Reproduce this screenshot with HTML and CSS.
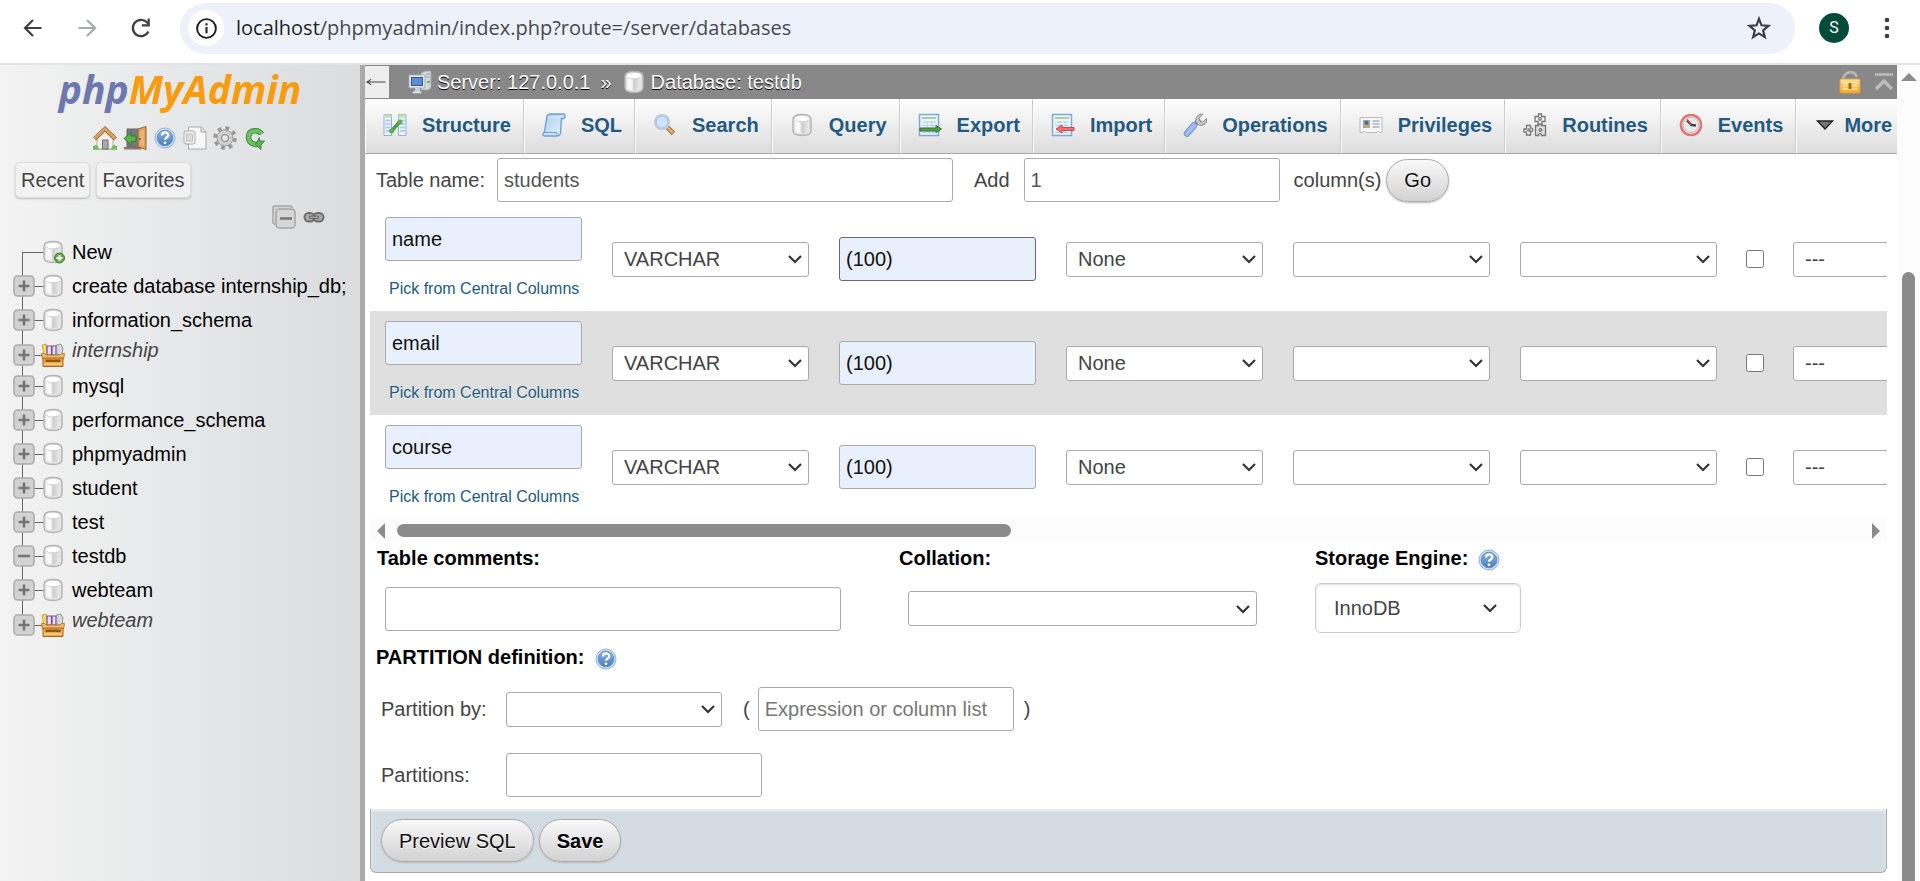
FILE: index.html
```html
<!DOCTYPE html>
<html lang="en">
<head>
<meta charset="utf-8">
<title>localhost / 127.0.0.1 / testdb | phpMyAdmin</title>
<link rel="stylesheet" href="styles.css">
</head>
<body>
<svg class="sprite" aria-hidden="true">
  <defs>
    <linearGradient id="g-cyl" x1="0" x2="1" y1="0" y2="0"><stop offset="0" stop-color="#fff"/><stop offset=".35" stop-color="#f4f4f4"/><stop offset=".5" stop-color="#cdcdcd"/><stop offset="1" stop-color="#e9e9e9"/></linearGradient>
    <linearGradient id="g-blue" x1="0" x2="0" y1="0" y2="1"><stop offset="0" stop-color="#8fb4e0"/><stop offset="1" stop-color="#4a7cb8"/></linearGradient>
    <linearGradient id="g-paper" x1="0" x2="1" y1="0" y2="1"><stop offset="0" stop-color="#a9cff2"/><stop offset="1" stop-color="#e6f2fc"/></linearGradient>
    <linearGradient id="g-gold" x1="0" x2="0" y1="0" y2="1"><stop offset="0" stop-color="#ffe29a"/><stop offset="1" stop-color="#f0a92c"/></linearGradient>
  </defs>
  <symbol id="i-db" viewBox="0 0 24 24">
    <path d="M3 6.500C3 2.500 6.500 1.500 12 1.500s9 1 9 5v11c0 4-3.500 5-9 5s-9-1-9-5z" fill="#e3e3e3" stroke="#b4b4b4" stroke-width="1.400"/>
    <path d="M5.500 6.500v11.500c1 3 12 3 13 0V6.500z" fill="url(#g-cyl)"/>
    <ellipse cx="12" cy="5.800" rx="6.800" ry="2.800" fill="#fff"/>
    <path d="M5.500 7c1 2.600 12 2.600 13 0" fill="none" stroke="#d2d2d2"/>
  </symbol>
  <symbol id="i-dbnew" viewBox="0 0 24 24">
    <use href="#i-db" width="24" height="24"/>
    <circle cx="18.500" cy="18" r="5" fill="#62ab47" stroke="#3e7d2c" stroke-width="1"/>
    <path d="M18.500 15v6M15.500 18h6" stroke="#fff" stroke-width="2"/>
  </symbol>
  <symbol id="i-group" viewBox="0 0 24 24">
    <path d="M1 2l4-1 1.500 11H3z" fill="#f3d768" stroke="#b99b33" stroke-width=".8"/>
    <path d="M6 3h4.500v9H6zM11 3h4v9h-4z" fill="#eadcf2" stroke="#7a4f8c" stroke-width="1.200"/>
    <path d="M15.500 2l4-1 2.500 4-1 7h-5z" fill="#d6d9e0" stroke="#8d929c"/>
    <path d="M.5 10.500h3l1.500 1.500h14l1.500-1.500h3l-1 5.500h-21z" fill="#f2bb6e" stroke="#b0752a" stroke-width=".9"/>
    <path d="M2 15h20v8.500H2z" fill="#e9a64c" stroke="#a66a1e" stroke-width="1"/>
    <path d="M4.500 16.500h15v2.500h-15z" fill="#94580f"/>
    <path d="M3 21h18" stroke="#ffd79a" stroke-width="1.400"/>
  </symbol>
  <symbol id="i-plus" viewBox="0 0 22 22"><rect x="1" y="1" width="20" height="20" rx="3.500" fill="#d2d2d2" stroke="#adadad" stroke-width="1.600"/><path d="M11 5.500v11M5.500 11h11" stroke="#777" stroke-width="2.600"/></symbol>
  <symbol id="i-minus" viewBox="0 0 22 22"><rect x="1" y="1" width="20" height="20" rx="3.500" fill="#d2d2d2" stroke="#adadad" stroke-width="1.600"/><path d="M5 11h12" stroke="#777" stroke-width="2.600"/></symbol>
  <symbol id="i-collapse" viewBox="0 0 24 24"><path d="M3 19c-1.500 0-2-.7-2-2V3c0-1.500.7-2 2-2h15c1.500 0 2 1 2 2" fill="#d4d4d4" stroke="#a6a6a6" stroke-width="1.500"/><rect x="4" y="4" width="19" height="19" rx="3.500" fill="#d6d6d6" stroke="#a6a6a6" stroke-width="1.500"/><path d="M8 13.500h12" stroke="#777" stroke-width="2.600"/></symbol>
  <symbol id="i-link" viewBox="0 0 24 24"><rect x="2.500" y="8" width="10" height="8.500" rx="4.200" fill="#aaa" stroke="#6d6d6d" stroke-width="2"/><rect x="11.500" y="8" width="10" height="8.500" rx="4.200" fill="#aaa" stroke="#6d6d6d" stroke-width="2"/><path d="M7 12.200h10" stroke="#555" stroke-width="3"/><path d="M7.500 12.200h9" stroke="#d0d0d0" stroke-width="1"/></symbol>
  <symbol id="i-home" viewBox="0 0 24 24">
    <path d="M0 20h24v3.500H0z" fill="#62a552"/><path d="M4 12l8-8 8 8v11H4z" fill="#f3efe9" stroke="#a9a39b" stroke-width=".8"/>
    <path d="M9.500 14h5.500v9H9.500z" fill="#a9aab0" stroke="#6e6f76"/>
    <path d="M1.500 13L12 3l10.500 10" fill="none" stroke="#9a6a33" stroke-width="4.200"/><path d="M1.500 12.700L12 2.700l10.500 10" fill="none" stroke="#dba267" stroke-width="2.600"/>
    <path d="M0 21c2-3 5-3 6 2.500H0zM24 21c-2-3-5-3-6 2.500h6z" fill="#78bd5f"/>
  </symbol>
  <symbol id="i-exit" viewBox="0 0 24 24">
    <path d="M4 3h14v18H4z" fill="#75797f" stroke="#666"/><path d="M1 21h17v2.500H1z" fill="#8a7566"/>
    <path d="M15 3l8-2.500v23L15 21z" fill="#dba05c" stroke="#9d6a31" stroke-width="1"/><path d="M17 5l4-1.500v17L17 19z" fill="#e8b67a"/>
    <circle cx="17" cy="13" r="1" fill="#75501f"/>
    <path d="M1 12.500l7-6v3.500h5v5.500H8V19z" fill="#59b34a" stroke="#2f7d2b"/>
  </symbol>
  <symbol id="i-help" viewBox="0 0 24 24">
    <circle cx="12" cy="12" r="10" fill="#cfe0f3" stroke="#8fb3dc" stroke-width="1"/><circle cx="12" cy="12" r="7.800" fill="url(#g-blue)" stroke="#5f8fca" stroke-width="1"/>
    <path d="M9 9.500c0-4 6.300-4 6.300-.3 0 2.300-3.200 2.300-3.200 4.600" fill="none" stroke="#fff" stroke-width="2.200"/><circle cx="12" cy="16.800" r="1.400" fill="#fff"/>
  </symbol>
  <symbol id="i-docs" viewBox="0 0 24 24">
    <path d="M5.500 1h13L23 5.500V23H5.500z" fill="#f7f7f7" stroke="#a9a9a9"/><path d="M18 1v5h5" fill="#ddd" stroke="#a9a9a9"/>
    <rect x="1" y="5" width="11" height="13" rx="2" fill="#f2f2f2" stroke="#aaa"/><rect x="3.500" y="8" width="6" height="7" fill="#ddd" stroke="#bbb"/>
  </symbol>
  <symbol id="i-gear" viewBox="0 0 24 24">
    <circle cx="12" cy="12" r="9.800" fill="none" stroke="#999" stroke-width="4" stroke-dasharray="3.850 3.850"/>
    <circle cx="12" cy="12" r="8" fill="#d0d0d0" stroke="#9d9d9d"/><circle cx="12" cy="12" r="3.500" fill="#e9e9e9" stroke="#999" stroke-width="1.500"/>
  </symbol>
  <symbol id="i-reload" viewBox="0 0 24 24"><path d="M18.500 8C16 3.500 6 3 5.500 11c0 6 5 7.500 8.500 7.500" fill="none" stroke="#3d8a3a" stroke-width="5.500"/><path d="M18.500 8C16 3.500 6 3 5.500 11c0 6 5 7.500 8.500 7.500" fill="none" stroke="#6cc063" stroke-width="3.700"/><path d="M16.500 11.500v3.500h5L18 19v4.500l-5.500-5z" fill="#5cb054" stroke="#3d8a3a"/></symbol>
  <symbol id="i-server" viewBox="0 0 24 24">
    <path d="M13 3l4-2h6v17l-3 2h-7z" fill="#d5d8db" stroke="#9fa4a9"/><path d="M18 4h4M18 7h4" stroke="#9fa4a9"/><circle cx="20.500" cy="12" r="1.300" fill="#56b04d"/>
    <rect x="1" y="5" width="16" height="13" rx="1" fill="#e8ecf1" stroke="#a3abb5"/><rect x="3.500" y="7.500" width="11" height="8" fill="#5c8dd6" stroke="#2f5796"/>
    <path d="M7.500 18h4l1 4h-6z" fill="#cfd3d8"/><path d="M4.500 22.500h9" stroke="#dfe2e5" stroke-width="1.600"/>
  </symbol>
  <symbol id="i-structure" viewBox="0 0 24 24">
    <path d="M1 1.500h7.500v21H1zM15.500 1.500H23v21h-7.500z" fill="#eaf3fb" stroke="#8db4dc"/>
    <path d="M1 1.500h7.500v3H1zM15.500 1.500H23v3h-7.500z" fill="#bfe3a8"/>
    <path d="M2.500 7.500h5M2.500 11h5M2.500 14.500h5M2.500 18h5M17 7.500h5M17 11h5M17 14.500h5M17 18h5" stroke="#a8c9ea" stroke-width="1.500"/>
    <path d="M8.500 18l8-9" stroke="#4f9e44" stroke-width="3.500"/><circle cx="8.500" cy="18" r="2.500" fill="#5fae50"/><circle cx="17" cy="9" r="2.500" fill="#5fae50"/>
  </symbol>
  <symbol id="i-sql" viewBox="0 0 24 24">
    <path d="M5 2.500C6 1 7.500 1 8.500 1h13c2 .3 2.300 3 .5 4.500h-2.500L18.500 20c-.3 2-1.500 3-3.500 3H2.500C0 23 .5 19.500 2.500 19z" fill="url(#g-paper)" stroke="#6f9dd2" stroke-width="1.300"/>
    <path d="M2.500 19.500h11.500c1 0 1.500 1.500.5 3" fill="#cfe3f7" stroke="#6f9dd2" stroke-width="1.100"/><path d="M7.500 4.500h10.500" stroke="#d9ebfb" stroke-width="1.500"/>
  </symbol>
  <symbol id="i-search" viewBox="0 0 24 24"><path d="M13.500 13.500l7 7" stroke="#a8713a" stroke-width="4.600"/><path d="M13.500 13.500l6.500 6.500" stroke="#e2ad6d" stroke-width="2.600"/><circle cx="9" cy="9" r="6.900" fill="#cfe5fa" stroke="#c3cadb" stroke-width="2.400"/><circle cx="9" cy="9" r="5.700" fill="none" stroke="#a5c4ea" stroke-width=".8"/></symbol>
  <symbol id="i-export" viewBox="0 0 24 24"><rect x="1.500" y="1.500" width="19" height="21" fill="#edf5fc" stroke="#7ea8d8" stroke-width="1.500"/><path d="M4 5h14" stroke="#8cc670" stroke-width="1.500"/><path d="M4 9h14M4 12.500h14M9 8v11M14 8v11M4 19.500h14" stroke="#b3cdea"/><path d="M2 15h16v-2.500l5.500 3.500-5.500 3.500V18H2z" fill="#4ea045" stroke="#2e6e2b"/></symbol>
  <symbol id="i-import" viewBox="0 0 24 24"><rect x="1.500" y="1.500" width="19" height="21" fill="#edf5fc" stroke="#7ea8d8" stroke-width="1.500"/><path d="M4 5h14" stroke="#8cc670" stroke-width="1.500"/><path d="M4 9h14M4 12.500h14M9 8v11M14 8v11M4 19.500h14" stroke="#b3cdea"/><path d="M23 14.500h-12v-2.500l-6 4 6 4v-2.500h12z" fill="#ef7272" stroke="#cf4545"/></symbol>
  <symbol id="i-wrench" viewBox="0 0 24 24"><path d="M11 12l6-5.500" stroke="#8b8b8b" stroke-width="4.500"/><path d="M20 1.200l-4 4 .8 3 3 .8 3.700-3.500c1 4-2.500 8-7 6.500-3-1-4.500-4-3-7.500 1-2.500 4-4 6.500-3.300z" fill="#c9c9c9" stroke="#8b8b8b"/><path d="M4 20.500l7-8" stroke="#6d93d0" stroke-width="6.500" stroke-linecap="round"/><path d="M4 20.500l7-8" stroke="#9dbdec" stroke-width="4.700" stroke-linecap="round"/></symbol>
  <symbol id="i-priv" viewBox="0 0 24 24"><path d="M1 4.500h22v15h-2l-1.500-1.500-1.500 1.500H7L5.500 18 4 19.500H1z" fill="#f4f6f8" stroke="#b5bcc4"/><rect x="4" y="7" width="7" height="8" fill="#7cb2e6"/><circle cx="7.500" cy="9.800" r="2" fill="#8a5a2d"/><path d="M4.500 15c0-3.500 6-3.500 6 0z" fill="#e7a23c"/><path d="M13.500 8h7M13.500 11h7M13.500 14h7" stroke="#a9b3be" stroke-width="1.400"/></symbol>
  <symbol id="i-routines" viewBox="0 0 24 24"><g fill="none" stroke="#777" stroke-width="1.300"><path d="M12.500 12.500h3c-1-2.500 4-2.500 3 0h4v10h-4c.5-2.500-3.500-2.500-3 0h-3z" fill="#ddd"/><path d="M15.500 1h3v2.500H22v5h-3V11h-4V8.500h-3v-5h3.500z" fill="#f3f3f3"/><path d="M1 16h2.500v-3.500h4V15c3-.8 3 4.500 0 3.500V22h-4v-3H1z" fill="#f3f3f3"/><circle cx="17" cy="6" r="1.300"/><circle cx="6" cy="17" r="1.200"/><circle cx="17.500" cy="17" r="1.300"/></g></symbol>
  <symbol id="i-clock" viewBox="0 0 24 24"><circle cx="12" cy="12" r="10" fill="#f5f5f5" stroke="#e57373" stroke-width="2.600"/><circle cx="12" cy="12" r="7.600" fill="#e9e9e9" stroke="#c0c0c0"/><path d="M8 7.500l4.500 4.500 4.500.5" fill="none" stroke="#444" stroke-width="2.400"/><path d="M12 12L8 6" stroke="#d44" stroke-width="1"/></symbol>
  <symbol id="i-more" viewBox="0 0 24 24"><path d="M4.500 8h15L12 16z" fill="#777" stroke="#222" stroke-width="1.400"/></symbol>
  <symbol id="i-lock" viewBox="0 0 24 24"><path d="M5.500 9C5 1 18 0 18.500 7" fill="none" stroke="#b8b8b8" stroke-width="2.600"/><rect x="2" y="9" width="20" height="14" rx="1" fill="url(#g-gold)" stroke="#e0a03a"/><path d="M5 13h14M5 16h14M5 19h14" stroke="#fff0b8" stroke-width="1.200"/><path d="M10.500 13h3v6h-3z" fill="#a86c0e"/></symbol>
  <symbol id="i-top" viewBox="0 0 24 24"><path d="M3 4.500h18" stroke="#bdbdbd" stroke-width="2.600"/><path d="M4 19l8-8 8 8" fill="none" stroke="#bdbdbd" stroke-width="3.200"/></symbol>
</svg>

<header class="browser">
  <button class="nav" aria-label="Back"><svg viewBox="0 0 24 24"><path d="M20.500 12H5M12 4l-8 8 8 8" fill="none" stroke="#3c4043" stroke-width="2.200"/></svg></button>
  <button class="nav nav-off" aria-label="Forward"><svg viewBox="0 0 24 24"><path d="M3.500 12H19M12 4l8 8-8 8" fill="none" stroke="#a8abae" stroke-width="2.200"/></svg></button>
  <button class="nav" aria-label="Reload"><svg viewBox="0 0 24 24"><path d="M19.500 15.500A8.200 8.200 0 1 1 18 6.300l2 2.200" fill="none" stroke="#3c4043" stroke-width="2.300"/><path d="M20.800 2.500v8h-8V8.300h5.800V2.500z" fill="#3c4043"/></svg></button>
  <div class="omnibox">
    <button class="site-info" aria-label="View site information"><svg viewBox="0 0 24 24"><circle cx="12" cy="12" r="9" fill="none" stroke="#1f1f1f" stroke-width="1.900"/><path d="M12 10.500v6M12 7v2.200" stroke="#1f1f1f" stroke-width="2"/></svg></button>
    <div class="url"><span class="host">localhost</span>/phpmyadmin/index.php?route=/server/databases</div>
    <button class="star" aria-label="Bookmark this tab"><svg viewBox="0 0 24 24"><path d="M12 3.500l2.300 6 6.500.5-5 4.200 1.600 6.300-5.400-3.500-5.400 3.500 1.600-6.300-5-4.200 6.500-.5z" fill="none" stroke="#3c4043" stroke-width="2"/></svg></button>
  </div>
  <button class="avatar" aria-label="Profile">S</button>
  <button class="dots" aria-label="Menu"><svg viewBox="0 0 24 24"><circle cx="12" cy="4" r="2.300"/><circle cx="12" cy="12" r="2.300"/><circle cx="12" cy="20" r="2.300"/></svg></button>
</header>

<div class="page">
  <aside class="sidebar">
    <a class="logo" href="#"><span class="logo-php">php</span>MyAdmin</a>
    <nav class="quick" aria-label="Shortcuts">
      <a href="#" aria-label="Home"><svg class="icon"><use href="#i-home"/></svg></a>
      <a href="#" aria-label="Log out"><svg class="icon"><use href="#i-exit"/></svg></a>
      <a href="#" aria-label="phpMyAdmin documentation"><svg class="icon"><use href="#i-help"/></svg></a>
      <a href="#" aria-label="MariaDB documentation"><svg class="icon"><use href="#i-docs"/></svg></a>
      <a href="#" aria-label="Navigation panel settings"><svg class="icon"><use href="#i-gear"/></svg></a>
      <a href="#" aria-label="Reload navigation panel"><svg class="icon"><use href="#i-reload"/></svg></a>
    </nav>
    <div class="recent">
      <button class="chip">Recent</button>
      <button class="chip">Favorites</button>
    </div>
    <div class="tree-tools">
      <a href="#" aria-label="Collapse all"><svg class="icon"><use href="#i-collapse"/></svg></a>
      <a href="#" aria-label="Unlink from main panel"><svg class="icon"><use href="#i-link"/></svg></a>
    </div>
    <ul class="tree">
      <li class="first"><span class="no-toggle"></span><svg class="icon"><use href="#i-dbnew"/></svg><a href="#">New</a></li>
      <li><button class="toggle" aria-label="Expand"><svg><use href="#i-plus"/></svg></button><svg class="icon"><use href="#i-db"/></svg><a href="#">create database internship_db;</a></li>
      <li><button class="toggle" aria-label="Expand"><svg><use href="#i-plus"/></svg></button><svg class="icon"><use href="#i-db"/></svg><a href="#">information_schema</a></li>
      <li class="group"><button class="toggle" aria-label="Expand"><svg><use href="#i-plus"/></svg></button><svg class="icon"><use href="#i-group"/></svg><a href="#">internship</a></li>
      <li><button class="toggle" aria-label="Expand"><svg><use href="#i-plus"/></svg></button><svg class="icon"><use href="#i-db"/></svg><a href="#">mysql</a></li>
      <li><button class="toggle" aria-label="Expand"><svg><use href="#i-plus"/></svg></button><svg class="icon"><use href="#i-db"/></svg><a href="#">performance_schema</a></li>
      <li><button class="toggle" aria-label="Expand"><svg><use href="#i-plus"/></svg></button><svg class="icon"><use href="#i-db"/></svg><a href="#">phpmyadmin</a></li>
      <li><button class="toggle" aria-label="Expand"><svg><use href="#i-plus"/></svg></button><svg class="icon"><use href="#i-db"/></svg><a href="#">student</a></li>
      <li><button class="toggle" aria-label="Expand"><svg><use href="#i-plus"/></svg></button><svg class="icon"><use href="#i-db"/></svg><a href="#">test</a></li>
      <li><button class="toggle" aria-label="Collapse"><svg><use href="#i-minus"/></svg></button><svg class="icon"><use href="#i-db"/></svg><a href="#">testdb</a></li>
      <li><button class="toggle" aria-label="Expand"><svg><use href="#i-plus"/></svg></button><svg class="icon"><use href="#i-db"/></svg><a href="#">webteam</a></li>
      <li class="group last"><button class="toggle" aria-label="Expand"><svg><use href="#i-plus"/></svg></button><svg class="icon"><use href="#i-group"/></svg><a href="#">webteam</a></li>
    </ul>
  </aside>

  <main class="main">
    <div class="crumbs">
      <button class="collapser" aria-label="Hide panel"><svg viewBox="0 0 24 24"><path d="M20.500 12H2.500M6 9c-1 1.500-2.500 2.500-4.500 3 2 .5 3.500 1.500 4.500 3" fill="none" stroke="#444" stroke-width="1.100"/></svg></button>
      <a class="crumb crumb-server" href="#"><svg class="icon"><use href="#i-server"/></svg>Server: 127.0.0.1</a>
      <span class="crumb-sep">»</span>
      <a class="crumb crumb-db" href="#"><svg class="icon"><use href="#i-db"/></svg>Database: testdb</a>
      <div class="crumb-tools">
        <a href="#" aria-label="Page settings"><svg class="icon"><use href="#i-lock"/></svg></a>
        <a href="#" aria-label="Scroll to top"><svg class="icon"><use href="#i-top"/></svg></a>
      </div>
    </div>

    <nav class="tabs" aria-label="Database">
      <a href="#"><svg class="icon"><use href="#i-structure"/></svg>Structure</a>
      <a href="#"><svg class="icon"><use href="#i-sql"/></svg>SQL</a>
      <a href="#"><svg class="icon"><use href="#i-search"/></svg>Search</a>
      <a href="#"><svg class="icon"><use href="#i-db"/></svg>Query</a>
      <a href="#"><svg class="icon"><use href="#i-export"/></svg>Export</a>
      <a href="#"><svg class="icon"><use href="#i-import"/></svg>Import</a>
      <a href="#"><svg class="icon"><use href="#i-wrench"/></svg>Operations</a>
      <a href="#"><svg class="icon"><use href="#i-priv"/></svg>Privileges</a>
      <a href="#"><svg class="icon"><use href="#i-routines"/></svg>Routines</a>
      <a href="#"><svg class="icon"><use href="#i-clock"/></svg>Events</a>
      <a class="tab-more" href="#"><svg class="icon"><use href="#i-more"/></svg>More</a>
    </nav>

    <form class="form">
      <div class="name-row">
        <label for="table-name">Table name:</label>
        <input class="field name-field" id="table-name" type="text" value="students">
        <label class="add-label" for="add-cols">Add</label>
        <input class="field short-field" id="add-cols" type="text" value="1">
        <span class="cols-label">column(s)</span>
        <button class="btn" type="button">Go</button>
      </div>

      <div class="columns">
        <table>
          <colgroup><col class="c-std"><col class="c-std"><col class="c-std"><col class="c-std"><col class="c-std"><col class="c-std"><col class="c-check"><col class="c-std"></colgroup>
          <tbody>
            <tr>
              <td><input class="field filled" type="text" value="name" aria-label="Name"><a class="pick" href="#">Pick from Central Columns</a></td>
              <td><select class="select" aria-label="Type"><option>VARCHAR</option></select></td>
              <td><input class="field filled active" type="text" value="(100)" aria-label="Length/Values"></td>
              <td><select class="select" aria-label="Default"><option>None</option></select></td>
              <td><select class="select" aria-label="Collation"><option></option></select></td>
              <td><select class="select" aria-label="Attributes"><option></option></select></td>
              <td class="check"><input type="checkbox" aria-label="Null"></td>
              <td><select class="select" aria-label="Index"><option>---</option></select></td>
            </tr>
            <tr>
              <td><input class="field filled" type="text" value="email" aria-label="Name"><a class="pick" href="#">Pick from Central Columns</a></td>
              <td><select class="select" aria-label="Type"><option>VARCHAR</option></select></td>
              <td><input class="field filled" type="text" value="(100)" aria-label="Length/Values"></td>
              <td><select class="select" aria-label="Default"><option>None</option></select></td>
              <td><select class="select" aria-label="Collation"><option></option></select></td>
              <td><select class="select" aria-label="Attributes"><option></option></select></td>
              <td class="check"><input type="checkbox" aria-label="Null"></td>
              <td><select class="select" aria-label="Index"><option>---</option></select></td>
            </tr>
            <tr>
              <td><input class="field filled" type="text" value="course" aria-label="Name"><a class="pick" href="#">Pick from Central Columns</a></td>
              <td><select class="select" aria-label="Type"><option>VARCHAR</option></select></td>
              <td><input class="field filled" type="text" value="(100)" aria-label="Length/Values"></td>
              <td><select class="select" aria-label="Default"><option>None</option></select></td>
              <td><select class="select" aria-label="Collation"><option></option></select></td>
              <td><select class="select" aria-label="Attributes"><option></option></select></td>
              <td class="check"><input type="checkbox" aria-label="Null"></td>
              <td><select class="select" aria-label="Index"><option>---</option></select></td>
            </tr>
          </tbody>
        </table>
      </div>
      <div class="hscroll" aria-hidden="true">
        <svg viewBox="0 0 8 16"><path d="M8 0v16L0 8z"/></svg>
        <div class="htrack"><div class="hthumb"></div></div>
        <svg viewBox="0 0 8 16"><path d="M0 0v16l8-8z"/></svg>
      </div>

      <div class="options">
        <div class="option">
          <label class="title" for="comments">Table comments:</label>
          <input class="field comments" id="comments" type="text">
        </div>
        <div class="option">
          <label class="title" for="collation">Collation:</label>
          <select class="select collation" id="collation"><option></option></select>
        </div>
        <div class="option">
          <div class="title"><label for="engine">Storage Engine:</label><a href="#" aria-label="Storage engine help"><svg class="icon"><use href="#i-help"/></svg></a></div>
          <select class="select engine" id="engine"><option>InnoDB</option></select>
        </div>
      </div>

      <div class="title partition-title"><span>PARTITION definition:</span><a href="#" aria-label="Partition help"><svg class="icon"><use href="#i-help"/></svg></a></div>
      <div class="partition-row">
        <label for="part-by">Partition by:</label>
        <select class="select part-by" id="part-by"><option></option></select>
        <span class="paren">(</span>
        <input class="field short-field" type="text" placeholder="Expression or column list" aria-label="Partition expression">
        <span>)</span>
      </div>
      <div class="partition-row partition-count">
        <label for="parts">Partitions:</label>
        <input class="field short-field" id="parts" type="text">
      </div>

      <div class="actions">
        <button class="btn" type="button">Preview SQL</button>
        <button class="btn btn-save" type="button">Save</button>
      </div>
    </form>
  </main>

  <div class="vscroll" aria-hidden="true">
    <svg viewBox="0 0 16 8"><path d="M0 8h16L8 0z"/></svg>
    <div class="vthumb"></div>
  </div>
</div>
</body>
</html>
```

FILE: styles.css
```css
* { box-sizing: border-box; }

body {
  margin: 0;
  height: 100vh;
  display: flex;
  flex-direction: column;
  overflow: hidden;
  background: #fff;
  color: #444;
  font-family: "Liberation Sans", Arial, sans-serif;
  font-size: 20px;
  line-height: 24px;
}

a { color: #235a81; text-decoration: none; }
button, input, select { font: inherit; margin: 0; }
button { cursor: pointer; }
.sprite { position: absolute; width: 0; height: 0; }
.icon { width: 24px; height: 24px; display: block; flex: none; }

/* Browser toolbar */
.browser {
  flex: none;
  height: 65px;
  display: flex;
  align-items: center;
  padding: 0 20px 7px 20px;
  border-bottom: 2px solid #e2e3e5;
}
.nav, .site-info, .star, .dots {
  border: 0;
  padding: 0;
  background: none;
  display: flex;
  align-items: center;
  justify-content: center;
}
.nav { width: 26px; margin-right: 28px; }
.nav svg { width: 24px; height: 24px; }
.omnibox {
  flex: 1;
  height: 51px;
  display: flex;
  align-items: center;
  padding: 0 23px 0 8px;
  border-radius: 26px;
  background: #ecf1fa;
}
.nav + .omnibox { margin-left: -2px; }
.site-info { width: 36px; height: 36px; border-radius: 50%; background: #fff; }
.site-info svg { width: 25px; height: 25px; }
.url {
  flex: 1;
  padding-left: 12px;
  font-family: "Open Sans", "Noto Sans", sans-serif;
  font-size: 20px;
  color: #474a4e;
}
.host { color: #1f1f1f; }
.star svg { width: 26px; height: 26px; }
.avatar {
  width: 30px;
  height: 30px;
  margin: 0 25px 0 24px;
  padding: 0;
  border: 0;
  border-radius: 50%;
  background: #054b3b;
  color: #fff;
  font-family: Roboto, sans-serif;
  font-size: 16px;
}
.dots svg { width: 26px; height: 24px; fill: #3c4043; }

.page { flex: 1; display: flex; min-height: 0; }

/* Navigation panel */
.sidebar {
  flex: none;
  width: 365px;
  border-right: 5px solid #aaa;
  background: linear-gradient(to right, #f3f3f3, #dadcde);
}
.logo {
  display: block;
  height: 60px;
  text-align: center;
  font-family: "Open Sans", sans-serif;
  font-size: 39px;
  font-style: italic;
  font-weight: 700;
  line-height: 48px;
  color: #f89c0e;
}
.logo-php { color: #6c78af; }
.quick { display: flex; justify-content: center; gap: 6px; padding-top: 1px; }
.recent { display: flex; gap: 6px; padding: 12px 15px 0; }
.chip {
  height: 36px;
  padding: 0 5px;
  border: 1px solid #ddd;
  border-radius: 5px;
  background: #f2f2f2;
  box-shadow: 0 1px 2px #bbb;
  color: #444;
}
.tree-tools { display: flex; justify-content: flex-end; gap: 6px; padding: 7px 34px 6px 0; }
.tree { list-style: none; margin: 0; padding: 0 0 0 13px; }
.tree li {
  position: relative;
  display: flex;
  align-items: center;
  height: 34px;
  white-space: nowrap;
}
.tree li::before {
  content: "";
  position: absolute;
  left: 9px;
  top: 0;
  bottom: 0;
  border-left: 1px solid #666;
}
.tree li::after {
  content: "";
  position: absolute;
  left: 9px;
  top: 50%;
  width: 22px;
  border-top: 1px solid #666;
}
.tree li.first::before { top: 50%; }
.tree li.last::before { bottom: 50%; }
.tree .icon { position: relative; z-index: 1; margin-left: 6px; }
.no-toggle, .toggle { width: 22px; height: 22px; flex: none; }
.toggle { position: relative; z-index: 1; padding: 0; border: 0; background: none; }
.toggle svg { width: 22px; height: 22px; display: block; }
.tree a { margin-left: 7px; color: #000; }
.tree .group { height: 32px; padding-top: 4px; }
.tree .group::after { top: 18px; }
.tree .group a { align-self: flex-start; margin-top: -3px; color: #444; font-style: italic; }

/* Header */
.main { flex: 1; min-width: 0; display: flex; flex-direction: column; }
.crumbs {
  flex: none;
  height: 34px;
  display: flex;
  align-items: center;
  background: #888;
  color: #fff;
  text-shadow: 0 1px 0 #000;
  white-space: nowrap;
}
.collapser { width: 24px; height: 32px; padding: 0; border: 0; background: #eee; }
.collapser svg { width: 24px; height: 24px; display: block; }
.crumb { display: flex; align-items: center; gap: 5px; color: #fff; line-height: 28px; }
.crumb-server { margin-left: 19px; }
.crumb-sep { margin: 0 10px; line-height: 28px; }
.crumb-tools { margin-left: auto; display: flex; gap: 10px; padding-right: 1px; }

.tabs {
  flex: none;
  height: 55px;
  display: flex;
  overflow: hidden;
  border-bottom: 1px solid #aaa;
  background: linear-gradient(#fff, #dcdcdc);
  white-space: nowrap;
}
.tabs a {
  flex: none;
  display: flex;
  align-items: center;
  gap: 15px;
  padding: 0 12px 2px 17px;
  border-left: 1px solid #fff;
  border-right: 1px solid #ccc;
  font-weight: bold;
}
.tabs .tab-more { gap: 7px; padding-left: 16px; padding-right: 0; border-right: 0; }

/* Form controls */
.form { flex: 1; display: flex; flex-direction: column; padding: 4px 10px 0 5px; }
.field {
  height: 44px;
  padding: 0 6px;
  border: 1px solid #aaa;
  border-radius: 3px;
  background: #fff;
  color: #555;
}
.field::placeholder { color: #777; }
.filled { width: 100%; background: #e8f0fe; color: #111; }
.active { border-color: #667; }
.short-field { width: 256px; }
.select {
  appearance: none;
  height: 35px;
  padding: 0 30px 0 11px;
  border: 1px solid #aaa;
  border-radius: 3px;
  background: #fff url("data:image/svg+xml,%3Csvg xmlns='http://www.w3.org/2000/svg' width='14' height='10'%3E%3Cpath d='M1 2l6 6 6-6' fill='none' stroke='%23333' stroke-width='2.200'/%3E%3C/svg%3E") no-repeat right 6px center;
  color: #444;
}
.btn {
  height: 43px;
  padding: 0 17px;
  border: 1px solid #aaa;
  border-radius: 22px;
  background: linear-gradient(#f9f9f9, #d2d2d2);
  box-shadow: 0 1px 2px #bbb;
  color: #111;
  text-shadow: 0 1px 0 #fff;
}
.btn-save { font-weight: bold; color: #000; }

.name-row { display: flex; align-items: center; padding-left: 6px; }
.name-field { width: 456px; margin-left: 12px; }
.add-label { margin: 0 14px 0 21px; }
.cols-label { margin: 0 5px 0 14px; }

/* Column definitions */
.columns { overflow: hidden; margin-top: 5px; }
.columns table { width: 1635px; table-layout: fixed; border-collapse: collapse; }
.c-std { width: 227px; }
.c-check { width: 46px; }
.columns td { height: 104px; padding: 0 15px; vertical-align: middle; }
.columns td .select { width: 100%; display: block; }
.columns .filled { display: block; }
.columns tr:nth-child(even) { background: #dfdfdf; }
.columns .check { padding: 0; text-align: center; }
.check input { display: block; width: 18px; height: 18px; margin: 0 auto; }
.pick {
  display: block;
  margin-top: 16px;
  padding-left: 4px;
  font-size: 16px;
  line-height: 24px;
  white-space: nowrap;
  text-shadow: 0 1px 0 #fff;
}

.hscroll {
  height: 23px;
  display: flex;
  align-items: center;
  gap: 12px;
  padding: 0 7px;
  background: #fcfcfc;
}
.hscroll svg { width: 8px; height: 16px; fill: #8b8b8b; }
.htrack { flex: 1; }
.hthumb { width: 42%; height: 13px; border-radius: 7px; background: #8b8b8b; }

/* Table options */
.options { display: flex; padding-left: 7px; }
.option { display: flex; flex-direction: column; align-items: flex-start; }
.option:nth-child(1) { width: 522px; }
.option:nth-child(2) { width: 416px; }
.title { display: flex; align-items: center; gap: 9px; height: 32px; color: #000; font-weight: bold; }
.title .icon { margin-top: 3px; }
.comments { width: 456px; margin: 13px 0 0 8px; }
.collation { width: 349px; margin: 17px 0 0 9px; }
.engine {
  width: 206px;
  height: 50px;
  margin-top: 9px;
  padding-left: 18px;
  border-color: #ccc;
  border-radius: 6px;
  box-shadow: inset 0 1px 2px #ddd;
  background-position: right 23px center;
}
.partition-title { margin-top: 8px; padding-left: 6px; }
.partition-row { display: flex; align-items: center; margin-top: 14px; padding-left: 11px; }
.partition-row label { width: 125px; }
.partition-count { margin-top: 22px; }
.part-by { width: 216px; }
.paren { margin: 0 8px 0 21px; }
.partition-row .short-field + span { margin-left: 10px; }

.actions {
  display: flex;
  gap: 5px;
  margin-top: 12px;
  padding: 10px;
  border: 1px solid #aaa;
  border-top: 0;
  border-radius: 0 0 6px 6px;
  background: #d3dce3;
  box-shadow: inset 0 2px 3px #eef2f5;
}

/* Page scrollbar */
.vscroll {
  flex: none;
  width: 23px;
  display: flex;
  flex-direction: column;
  align-items: center;
  gap: 191px;
  padding-top: 8px;
  background: #fcfcfc;
}
.vscroll svg { width: 16px; height: 8px; fill: #8b8b8b; }
.vthumb { flex: 1; width: 13px; border-radius: 7px 7px 0 0; background: #8b8b8b; }
```
